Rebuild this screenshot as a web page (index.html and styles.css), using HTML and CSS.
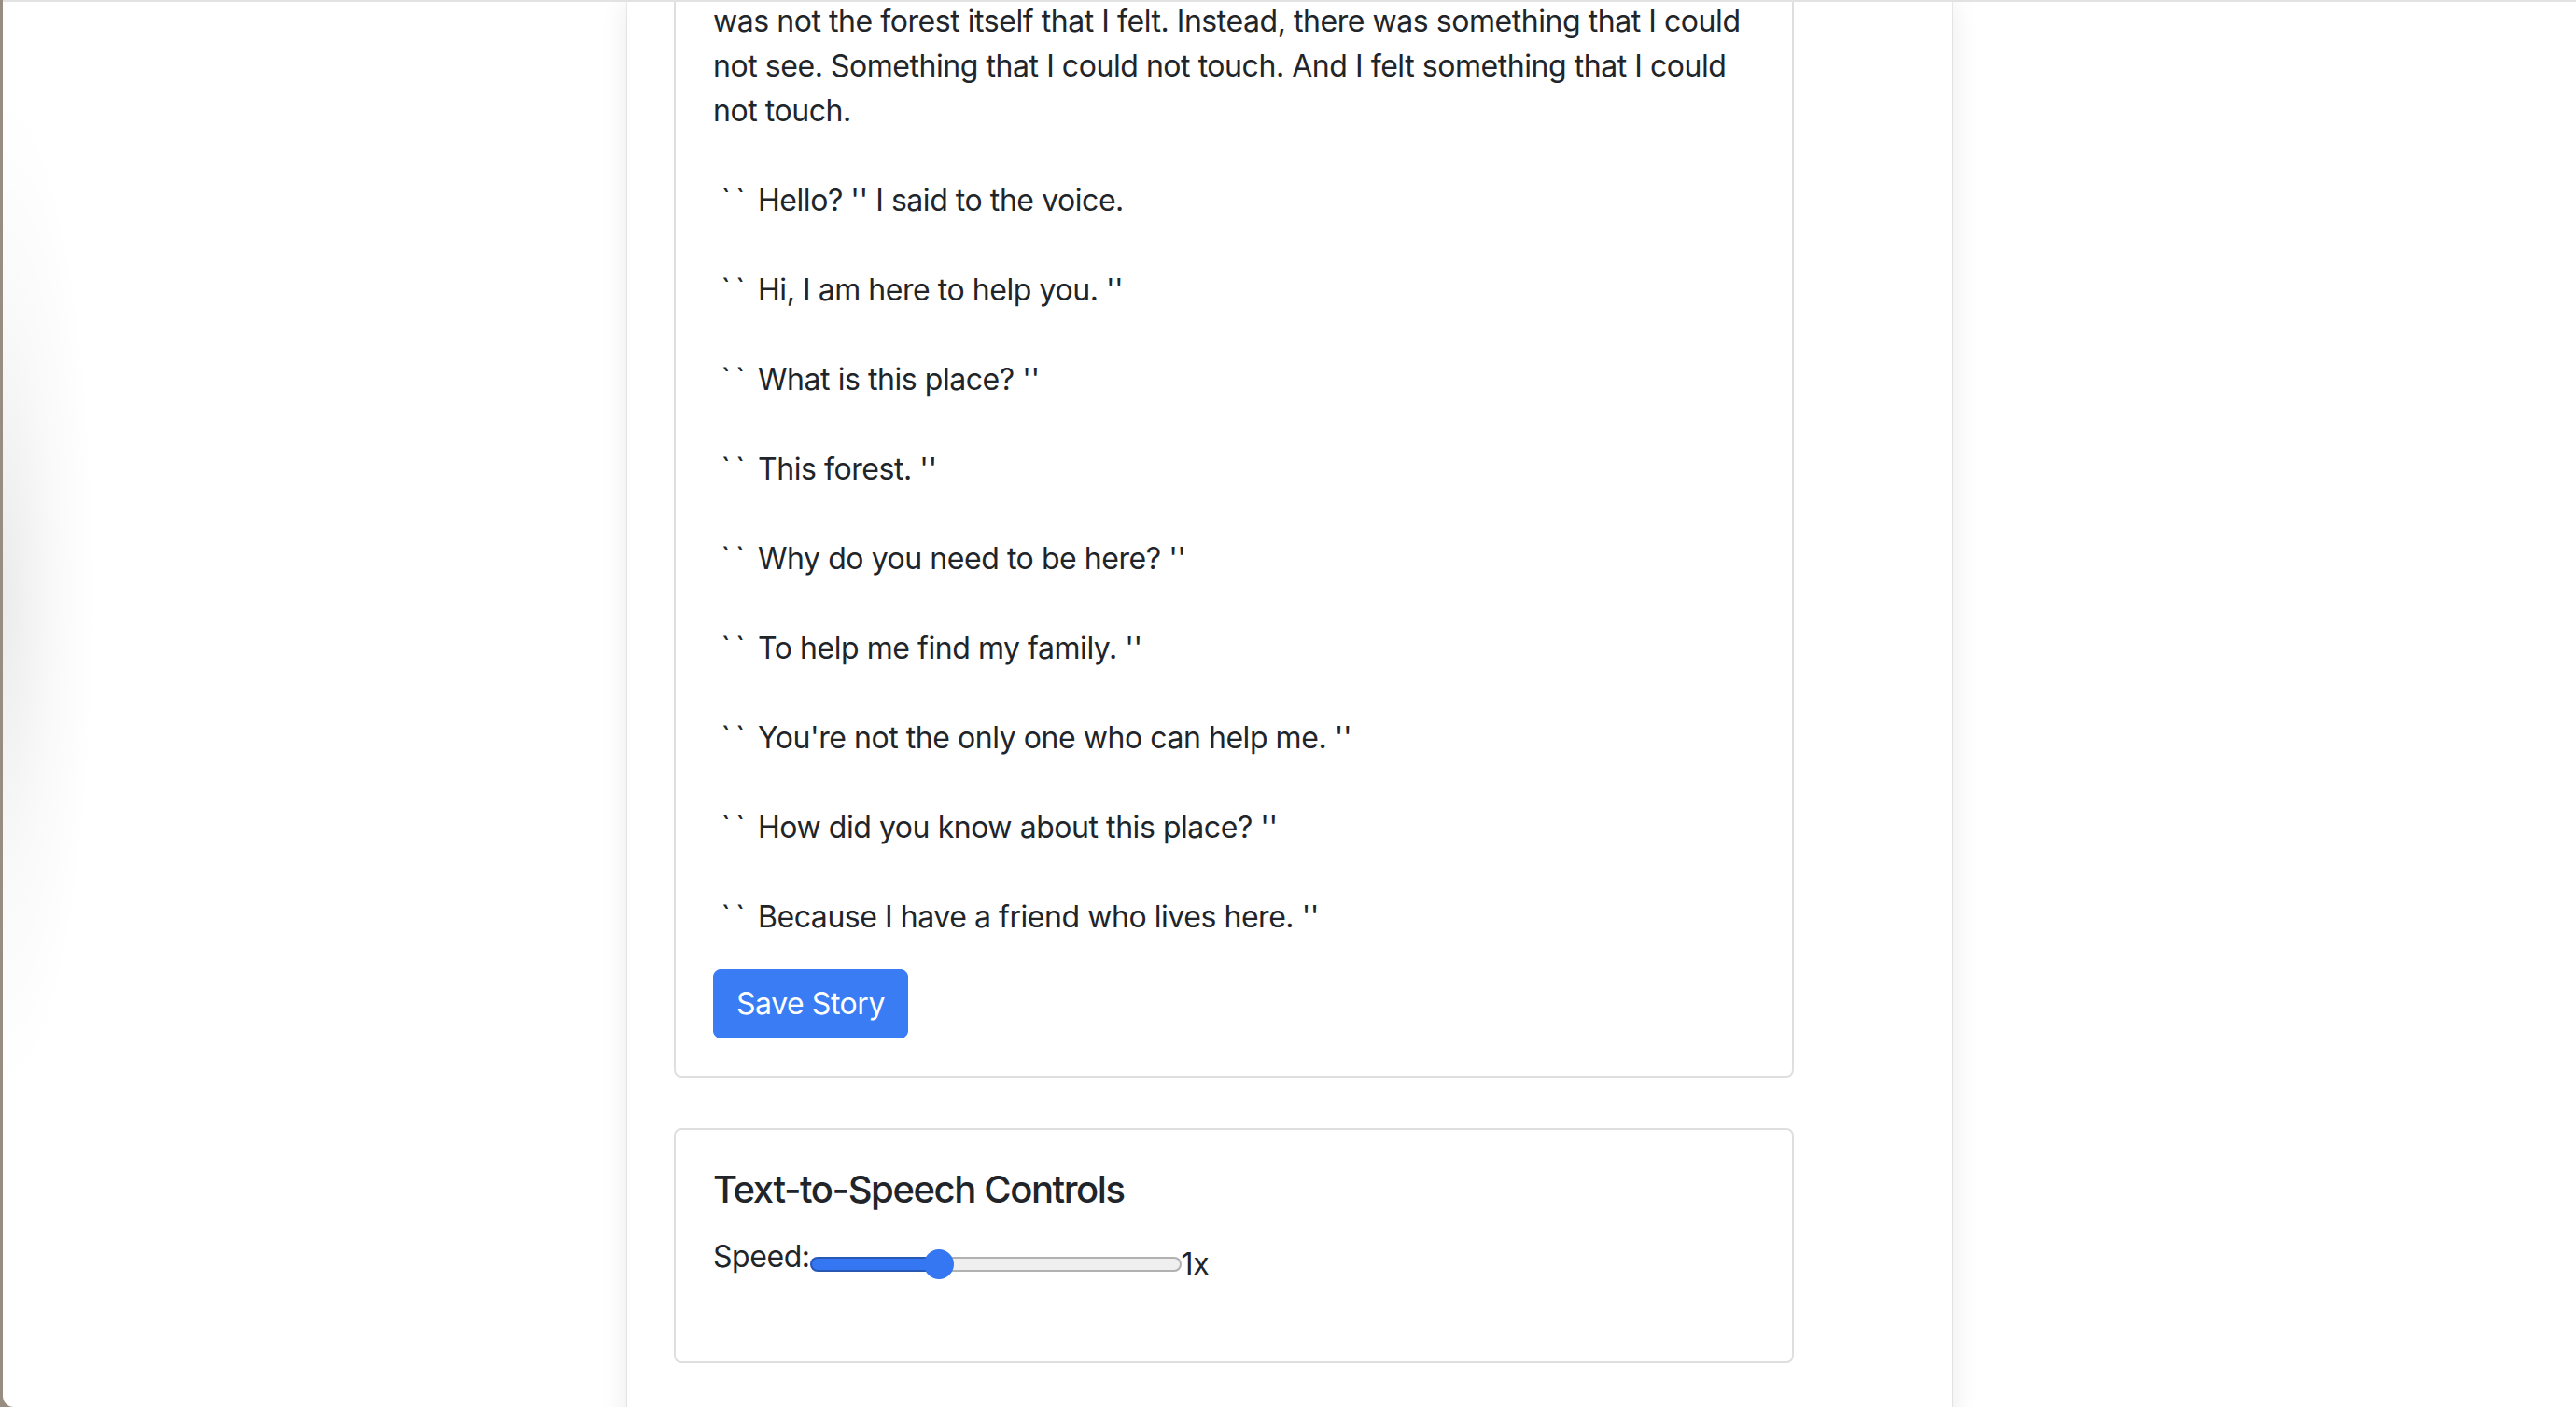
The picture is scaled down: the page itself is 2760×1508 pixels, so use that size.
FILE: index.html
```html
<!DOCTYPE html>
<html lang="en">
<head>
<meta charset="utf-8">
<title>Story</title>
<link rel="stylesheet" href="styles.css">
</head>
<body>
<div class="window">
  <main class="container">
    <section class="card story-card">
      <div class="card-body">
        <div class="story-text">
          <p>was not the forest itself that I felt. Instead, there was something that I could not see. Something that I could not touch. And I felt something that I could not touch.</p>
          <p> <span class="tick">``</span> Hello? '' I said to the voice.</p>
          <p> <span class="tick">``</span> Hi, I am here to help you. ''</p>
          <p> <span class="tick">``</span> What is this place? ''</p>
          <p> <span class="tick">``</span> This forest. ''</p>
          <p> <span class="tick">``</span> Why do you need to be here? ''</p>
          <p> <span class="tick">``</span> To help me find my family. ''</p>
          <p> <span class="tick">``</span> You're not the only one who can help me. ''</p>
          <p> <span class="tick">``</span> How did you know about this place? ''</p>
          <p> <span class="tick">``</span> Because I have a friend who lives here. ''</p>
        </div>
        <button class="btn btn-primary" type="button">Save Story</button>
      </div>
    </section>
    <section class="card tts-card">
      <div class="card-body">
        <h5 class="card-title">Text-to-Speech Controls</h5>
        <div class="speed-row">
          <label for="speed">Speed:</label><input class="speed-range" type="range" id="speed" min="0.5" max="2" step="0.1" value="1"><span class="speed-value">1x</span>
        </div>
      </div>
    </section>
  </main>
</div>
</body>
</html>
```
FILE: styles.css
```css
html, body {
  margin: 0;
  height: 100%;
}

body {
  background: #978d81;
  font-family: Inter, "Noto Sans", sans-serif;
  letter-spacing: -0.028em;
  color: #212529;
}

.window {
  margin-left: 3px;
  height: 100vh;
  box-sizing: border-box;
  border-top: 2px solid #e2e2e2;
  border-bottom-left-radius: 12px;
  overflow: hidden;
  display: flex;
  justify-content: center;
  background:
    radial-gradient(ellipse 100px 540px at 0 635px, rgba(0, 0, 0, 0.08), rgba(0, 0, 0, 0.025) 55%, rgba(0, 0, 0, 0) 100%),
    #ffffff;
}

.container {
  width: 1419px;
  flex-shrink: 0;
  box-sizing: border-box;
  height: calc(100% + 40px);
  padding: 0 50px;
  display: flex;
  flex-direction: column;
  align-items: flex-start;
  background: #ffffff;
  box-shadow: 0 0 0 1px rgba(0, 0, 0, 0.07), 0 0 28px rgba(0, 0, 0, 0.09);
}

.card {
  width: 1200px;
  box-sizing: border-box;
  border: 2px solid #dfdfdf;
  border-radius: 8px;
  background: #ffffff;
}

.story-card {
  margin-top: -45px;
  margin-bottom: 54px;
}

.card-body {
  padding: 40px;
}

.story-text {
  font-size: 32px;
  line-height: 48px;
  margin-bottom: 32px;
}

.story-text p {
  margin: 0 0 48px;
  white-space: pre-wrap;
}

.story-text p:last-child {
  margin-bottom: 0;
}

.tick {
  letter-spacing: 0.16em;
}

.btn {
  font-family: inherit;
  letter-spacing: inherit;
  font-size: 32px;
  line-height: 48px;
  padding: 12px 24px;
  border: 1px solid #3a7cf4;
  border-radius: 8px;
  background: #3a7cf4;
  color: #ffffff;
  cursor: pointer;
}

.card-title {
  margin: 0 0 24px;
  font-size: 40px;
  line-height: 48px;
  font-weight: 500;
  letter-spacing: -0.035em;
}

.speed-row {
  display: flex;
  align-items: center;
  margin-bottom: 32px;
  font-size: 32px;
  line-height: 48px;
}

.speed-row label {
  margin-bottom: 16px;
}

.speed-range {
  -webkit-appearance: none;
  appearance: none;
  width: 398px;
  height: 32px;
  margin: 0;
  background: transparent;
}

.speed-range::-webkit-slider-runnable-track {
  box-sizing: border-box;
  height: 16px;
  border: 2px solid rgba(0, 0, 0, 0.26);
  border-radius: 8px;
  background: linear-gradient(to right, #3577f3 0, #3577f3 34.7%, #efefef 34.7%) border-box;
}

.speed-range::-webkit-slider-thumb {
  -webkit-appearance: none;
  appearance: none;
  width: 32px;
  height: 32px;
  margin-top: -10px;
  border-radius: 50%;
  background: #3577f3;
  border: none;
}
```
